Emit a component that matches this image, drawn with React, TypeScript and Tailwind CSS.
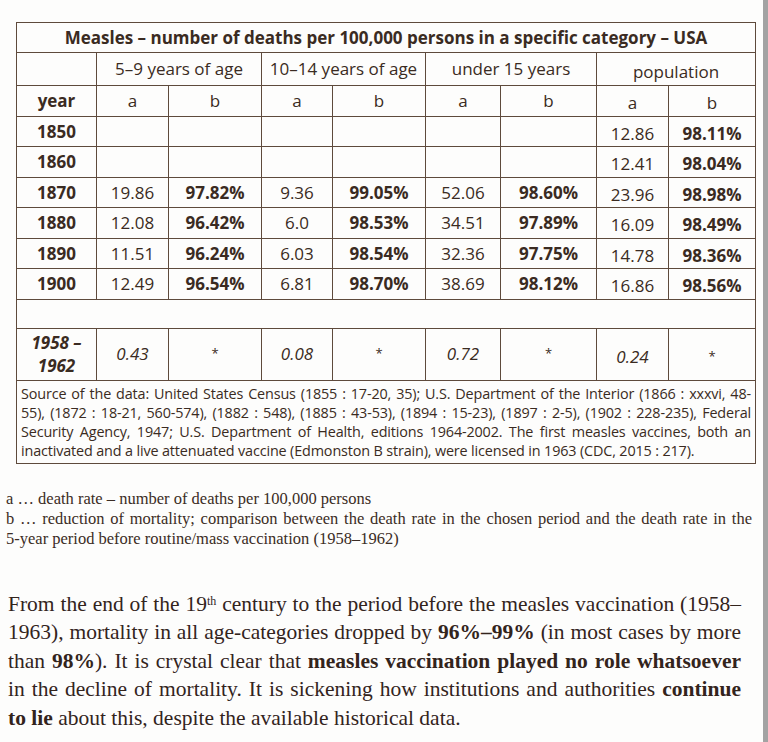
import React from "react";

type Row = { year: string; cells: (string | null)[] };

const rows: Row[] = [
  { year: "1850", cells: [null, null, null, null, null, null, "12.86", "98.11%"] },
  { year: "1860", cells: [null, null, null, null, null, null, "12.41", "98.04%"] },
  { year: "1870", cells: ["19.86", "97.82%", "9.36", "99.05%", "52.06", "98.60%", "23.96", "98.98%"] },
  { year: "1880", cells: ["12.08", "96.42%", "6.0", "98.53%", "34.51", "97.89%", "16.09", "98.49%"] },
  { year: "1890", cells: ["11.51", "96.24%", "6.03", "98.54%", "32.36", "97.75%", "14.78", "98.36%"] },
  { year: "1900", cells: ["12.49", "96.54%", "6.81", "98.70%", "38.69", "98.12%", "16.86", "98.56%"] },
];

const widths = [80, 72, 93, 71, 93, 75, 96, 72, 87];

const cell = "border border-[#5e4a3c] text-center align-middle p-0";

const sourceLines = [
  "Source of the data: United States Census (1855 : 17-20, 35); U.S. Department of the Interior (1866 : xxxvi, 48-",
  "55), (1872 : 18-21, 560-574), (1882 : 548), (1885 : 43-53), (1894 : 15-23), (1897 : 2-5), (1902 : 228-235), Federal",
  "Security Agency, 1947; U.S. Department of Health, editions 1964-2002. The first measles vaccines, both an",
];

function Line({ children, last }: { children: React.ReactNode; last?: boolean }) {
  return (
    <div className={last ? "text-left whitespace-nowrap" : "text-justify [text-align-last:justify] whitespace-nowrap"}>
      {children}
    </div>
  );
}

export default function App() {
  return (
    <div className="w-[768px] h-[742px] bg-[#fdfdfc] relative overflow-hidden text-[#3a2b22]">
      {/* gray edge of the scan */}
      <div className="absolute right-0 top-0 h-full w-[5px] bg-[#a3a3a3]" />

      <div className="pt-[22px] pl-[16px]">
        <table className="table-fixed border-collapse w-[739px] font-['Open_Sans',sans-serif] text-[17px]">
          <colgroup>
            {widths.map((w, i) => (
              <col key={i} style={{ width: w }} />
            ))}
          </colgroup>
          <tbody>
            <tr className="h-[30px]">
              <td colSpan={9} className={`${cell} font-bold text-[17px]`}>
                Measles – number of deaths per 100,000 persons in a specific category – USA
              </td>
            </tr>
            <tr className="h-[33px]">
              <td className={cell} />
              <td colSpan={2} className={cell}>5–9 years of age</td>
              <td colSpan={2} className={cell}>10–14 years of age</td>
              <td colSpan={2} className={cell}>under 15 years</td>
              <td colSpan={2} className={`${cell} pt-[6px]`}>population</td>
            </tr>
            <tr className="h-[30px]">
              <td className={`${cell} font-bold`}>year</td>
              {["a", "b", "a", "b", "a", "b", "a", "b"].map((l, i) => (
                <td key={i} className={`${cell} ${i >= 6 ? "pt-[4px]" : ""}`}>{l}</td>
              ))}
            </tr>
            {rows.map((r) => (
              <tr key={r.year} className="h-[30.5px]">
                <td className={`${cell} font-bold`}>{r.year}</td>
                {r.cells.map((c, i) => (
                  <td key={i} className={`${cell} ${i % 2 === 1 ? "font-bold" : ""} ${i >= 6 ? "pt-[4px]" : ""}`}>
                    {c}
                  </td>
                ))}
              </tr>
            ))}
            <tr className="h-[29px]">
              <td colSpan={9} className={cell} />
            </tr>
            <tr className="h-[52px] italic">
              <td className={`${cell} font-bold leading-[23px]`}>
                1958 –<br />1962
              </td>
              {["0.43", "*", "0.08", "*", "0.72", "*", "0.24", "*"].map((c, i) => (
                <td key={i} className={`${cell} ${c === "*" ? "text-[13px] not-italic" : ""} ${i >= 6 ? "pt-[6px]" : ""}`}>
                  {c}
                </td>
              ))}
            </tr>
            <tr>
              <td colSpan={9} className="border border-[#5e4a3c] px-[4px] pt-[3px] pb-[3px] text-[14.4px] leading-[19px] tracking-[-0.15px]">
                {sourceLines.map((l, i) => (
                  <Line key={i}>{l}</Line>
                ))}
                <Line last>
                  inactivated and a live attenuated vaccine (Edmonston B strain), were licensed in 1963 (CDC, 2015 : 217).
                </Line>
              </td>
            </tr>
          </tbody>
        </table>
      </div>

      <div className="mt-[25px] pl-[6px] pr-[16px] font-['Liberation_Serif',serif] text-[16.5px] leading-[20px] text-[#3b2c24]">
        <div>a … death rate – number of deaths per 100,000 persons</div>
        <Line>b … reduction of mortality; comparison between the death rate in the chosen period and the death rate in the</Line>
        <div>5-year period before routine/mass vaccination (1958–1962)</div>
      </div>

      <div className="mt-[41px] pl-[8px] pr-[27px] font-['Liberation_Serif',serif] text-[21.5px] leading-[28.5px] text-[#33241c]">
        <Line>
          From the end of the 19<sup className="text-[12px]">th</sup> century to the period before the measles vaccination (1958–
        </Line>
        <Line>
          1963), mortality in all age-categories dropped by <b>96%–99%</b> (in most cases by more
        </Line>
        <Line>
          than <b>98%</b>). It is crystal clear that <b>measles vaccination played no role whatsoever</b>
        </Line>
        <Line>
          in the decline of mortality. It is sickening how institutions and authorities <b>continue</b>
        </Line>
        <Line last>
          <b>to lie</b> about this, despite the available historical data.
        </Line>
      </div>
    </div>
  );
}
